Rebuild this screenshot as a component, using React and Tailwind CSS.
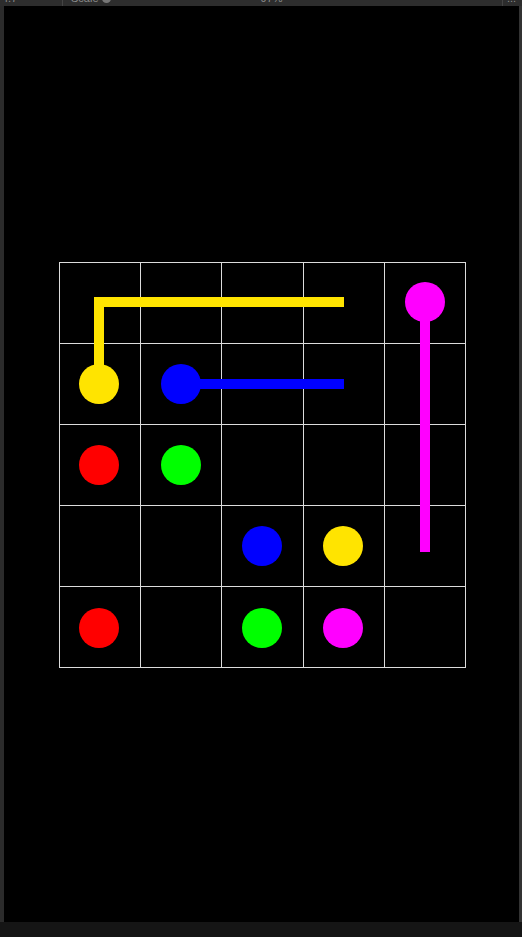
import React from "react";

const dots = [
  { x: 39, y: 121, c: "#ffe400" },
  { x: 121, y: 121, c: "#0000ff" },
  { x: 39, y: 202, c: "#ff0000" },
  { x: 121, y: 202, c: "#00ff00" },
  { x: 202, y: 283, c: "#0000ff" },
  { x: 283, y: 283, c: "#ffe400" },
  { x: 39, y: 365, c: "#ff0000" },
  { x: 202, y: 365, c: "#00ff00" },
  { x: 283, y: 365, c: "#ff00ff" },
  { x: 365, y: 39, c: "#ff00ff" },
];

export default function App() {
  const cells = Array.from({ length: 25 });
  return (
    <div className="w-[522px] h-[937px] flex flex-col bg-[#151515] overflow-hidden" style={{ fontFamily: '"Liberation Sans", Arial, sans-serif' }}>
      <div className="h-[6px] bg-[#2d2d2d] flex overflow-hidden text-[11px] leading-[11px] text-[#8a8a8a]">
        <div className="w-[63px] border-r border-[#444] -mt-[7px] pl-[2px]">4.7</div>
        <div className="flex-1 flex -mt-[7px]">
          <span className="ml-[8px]">Scale</span>
          <span className="ml-[3px] w-[9px] h-[9px] rounded-full bg-[#777] mt-[1px]"></span>
          <span className="ml-[150px]">97%</span>
        </div>
        <div className="w-[20px] border-l border-[#444] -mt-[7px] pl-[4px]">...</div>
      </div>
      <div className="flex-1 flex">
        <div className="w-[4px] bg-[#2b2b2b]"></div>
        <div className="flex-1 bg-black pt-[256px] pl-[55px]">
          <div className="relative w-[407px] h-[406px] grid grid-cols-5 grid-rows-5 border-l-[1.5px] border-t-[1.5px] border-[#dcdcdc]">
            {cells.map((_, i) => (
              <div key={i} className="border-r-[1.5px] border-b-[1.5px] border-[#dcdcdc]"></div>
            ))}
            <svg className="absolute inset-0" width="407" height="406" viewBox="0 0 407 406">
              <polyline points="39,121 39,39 284,39" fill="none" stroke="#ffe400" strokeWidth="10" strokeLinejoin="miter" strokeLinecap="butt" />
              <line x1="121" y1="121" x2="284" y2="121" stroke="#0000ff" strokeWidth="10" />
              <line x1="365" y1="39" x2="365" y2="289" stroke="#ff00ff" strokeWidth="10" />
              {dots.map((d, i) => (
                <circle key={i} cx={d.x} cy={d.y} r="20" fill={d.c} />
              ))}
            </svg>
          </div>
        </div>
        <div className="w-[3px] bg-[#333]"></div>
      </div>
      <div className="h-[15px] bg-[#151515]"></div>
    </div>
  );
}
